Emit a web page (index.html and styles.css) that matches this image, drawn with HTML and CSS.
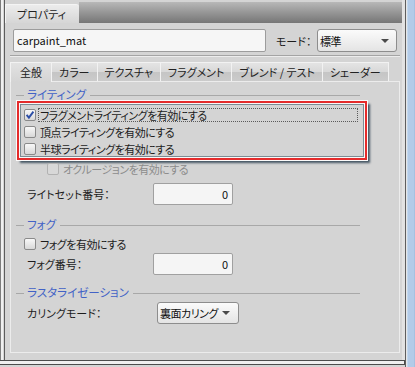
FILE: index.html
```html
<!DOCTYPE html>
<html lang="ja">
<head>
<meta charset="utf-8">
<title>プロパティ</title>
<link rel="stylesheet" href="styles.css">
</head>
<body>
<div class="app">
  <div class="col">
    <div class="upper">
      <div class="leftedge"></div>
      <div class="main">
        <div class="header">
          <div class="ptab">プロパティ</div>
          <div class="pbar"></div>
        </div>
        <div class="content">
          <div class="namerow">
            <div class="namefield">carpaint_mat</div>
            <span class="modelabel">モード：</span>
            <div class="select modesel"><span>標準</span><i class="arrow"></i></div>
          </div>
          <div class="sep"></div>
          <div class="tabs">
            <div class="tab active">全般</div>
            <div class="tab">カラー</div>
            <div class="tab">テクスチャ</div>
            <div class="tab">フラグメント</div>
            <div class="tab">ブレンド / テスト</div>
            <div class="tab">シェーダー</div>
          </div>
          <div class="panel">
            <div class="group">
              <div class="legend"><span class="dash"></span><span class="ltext">ライティング</span><span class="line"></span></div>
              <div class="highlight">
                <div class="check">
                  <span class="box"><svg width="10" height="10" viewBox="0 0 10 10"><path d="M1.6 4.8 L3.9 7.6 L8.4 1.6" fill="none" stroke="#2c4ea6" stroke-width="1.9"/></svg></span>
                  <span class="clabel focus">フラグメントライティングを有効にする</span>
                </div>
                <div class="check"><span class="box"></span><span class="clabel">頂点ライティングを有効にする</span></div>
                <div class="check"><span class="box"></span><span class="clabel">半球ライティングを有効にする</span></div>
              </div>
              <div class="check disabled sub"><span class="box"></span><span class="clabel">オクルージョンを有効にする</span></div>
              <div class="field first"><span class="flabel">ライトセット番号：</span><div class="num">0</div></div>
            </div>
            <div class="group fog">
              <div class="legend"><span class="dash"></span><span class="ltext">フォグ</span><span class="line"></span></div>
              <div class="check plain"><span class="box"></span><span class="clabel">フォグを有効にする</span></div>
              <div class="field"><span class="flabel">フォグ番号：</span><div class="num">0</div></div>
            </div>
            <div class="group raster">
              <div class="legend"><span class="dash"></span><span class="ltext">ラスタライゼーション</span><span class="line"></span></div>
              <div class="field cull"><span class="flabel">カリングモード：</span><div class="select cullsel"><span>裏面カリング</span><i class="arrow"></i></div></div>
            </div>
          </div>
        </div>
      </div>
      <div class="rlight"></div>
    </div>
    <div class="hscroll"></div>
  </div>
  <div class="rightedge"></div>
</div>
</body>
</html>
```

FILE: styles.css
```css
html, body {
  margin: 0;
  padding: 0;
}
body {
  width: 415px;
  height: 367px;
  overflow: hidden;
  background: #d4d4d4;
  font-family: "Noto Sans CJK JP", "Noto Sans", sans-serif;
  font-size: 11px;
  line-height: 14px;
  color: #1c1c1c;
  font-feature-settings: "palt";
}
.app {
  display: flex;
  height: 367px;
}
.col {
  width: 405px;
  display: flex;
  flex-direction: column;
}
.upper {
  height: 360px;
  display: flex;
}
.leftedge {
  width: 5px;
  background: linear-gradient(to right, #7c7c7c 0 1px, #f0f0f0 1px 3px, #d4d4d4 3px 4px, #5c5c5c 4px 5px);
}
.main {
  width: 397px;
  display: flex;
  flex-direction: column;
}
.rlight {
  width: 3px;
  background: #e2e2e2;
}
.rightedge {
  width: 10px;
  background: linear-gradient(to right, #5e5e5e 0 1px, #e6e6e6 1px 2px, #c4d9ef 2px 3px, #b3cbe8 3px 9px, #a6c1e0 9px 10px);
}
.hscroll {
  height: 5px;
  box-sizing: border-box;
  border: 1px solid #4c4c4c;
  border-left: none;
  background: #efefef;
  margin-bottom: 2px;
}

/* header */
.header {
  display: flex;
  align-items: flex-end;
  height: 23px;
}
.ptab {
  height: 19px;
  box-sizing: border-box;
  padding: 0 13px 0 11px;
  line-height: 18px;
  border-left: 1px solid #f4f4f4;
  border-top: 1px solid #f4f4f4;
  border-top-right-radius: 3px;
  background: linear-gradient(#ececec, #d6d6d6);
  color: #222;
}
.pbar {
  flex: 1;
  height: 21px;
  background: linear-gradient(#b8b8b8, #969696 50%, #767676);
}

.content {
  padding: 0 2px 0 5px;
}
.namerow {
  display: flex;
  align-items: center;
  margin-top: 6px;
  height: 23px;
  padding: 0 3px;
}
.namefield {
  width: 253px;
  height: 23px;
  box-sizing: border-box;
  border: 1px solid #9c9c9c;
  border-radius: 2px;
  background: #f6f6f6;
  padding-left: 3px;
  line-height: 21px;
  color: #111;
}
.modelabel {
  margin-left: 10px;
  width: 41px;
}
.select {
  display: flex;
  align-items: center;
  justify-content: space-between;
  box-sizing: border-box;
  height: 23px;
  border: 1px solid #8d8d8d;
  border-radius: 3px;
  background: linear-gradient(#fbfbfb, #e4e4e4);
  padding: 0 7px 0 2px;
  color: #111;
}
.select span {
  letter-spacing: -0.5px;
}
.modesel {
  width: 80px;
}
.arrow {
  width: 0;
  height: 0;
  border-left: 4px solid transparent;
  border-right: 4px solid transparent;
  border-top: 4px solid #4a4a4a;
}
.sep {
  margin-top: 3px;
  height: 0;
  border-top: 1px solid #a4a4a4;
  border-bottom: 1px solid #ececec;
}

/* tabs */
.tabs {
  display: flex;
  margin-top: 5px;
  height: 19px;
  position: relative;
  z-index: 1;
}
.tab {
  box-sizing: border-box;
  height: 19px;
  padding: 0 7px;
  line-height: 18px;
  border-top: 1px solid #f2f2f2;
  border-right: 1px solid #f2f2f2;
  background: linear-gradient(#e4e4e4, #d8d8d8 50%, #c5c5c5 50%, #cbcbcb);
  color: #222;
}
.tab.active {
  border-left: 1px solid #f2f2f2;
  height: 20px;
  background: linear-gradient(#e2e2e2, #d4d4d4);
  padding: 0 9px;
}

/* panel */
.panel {
  box-sizing: border-box;
  height: 272px;
  border: 1px solid #ececec;
  background: #d4d4d4;
  padding-top: 5px;
}
.group {
  margin: 0 39px 0 5px;
}
.legend {
  display: flex;
  align-items: center;
  height: 14px;
}
.dash {
  width: 8px;
  height: 1px;
  background: #a8a8a8;
  margin-top: 2px;
}
.line {
  flex: 1;
  height: 1px;
  background: #a8a8a8;
  margin-top: 2px;
}
.ltext {
  color: #4262c6;
  margin: 0 4px 0 3px;
  font-size: 11.5px;
}
.highlight {
  margin: 0 -7px 0 1px;
  border: 2px solid #e42b2b;
  padding: 3px 5px 1px 5px;
  box-shadow: 0 0 0 1px #fbfbfb, 3px 3px 2px 0 rgba(45, 65, 80, 0.85), inset 0 0 0 1px #f8f8f8, inset 0 0 0 2px #7c8c94;
}
.check {
  display: flex;
  align-items: center;
  height: 17px;
}
.box {
  width: 12px;
  height: 12px;
  box-sizing: border-box;
  border: 1px solid #8a8a8a;
  border-radius: 2px;
  background: linear-gradient(#f8f8f8, #d8d8d8);
  margin-right: 2px;
  display: flex;
  align-items: center;
  justify-content: center;
}
.clabel {
  border: 1px dotted transparent;
  padding: 0 1px;
  line-height: 12px;
  letter-spacing: -0.5px;
}
.clabel.focus {
  flex: 1;
  border-color: #5a5a5a;
  margin-right: 2px;
}
.check.sub {
  padding-left: 31px;
}
.check.plain {
  padding-left: 8px;
  margin-top: 4px;
}
.disabled {
  color: #8c8c8c;
}
.disabled .box {
  border-color: #b2b2b2;
  background: #d8d8d8;
}
.field {
  display: flex;
  align-items: center;
  padding-left: 11px;
  margin-top: 1px;
}
.field.first {
  margin-top: 6px;
}
.flabel {
  width: 126px;
}
.num {
  width: 80px;
  height: 22px;
  box-sizing: border-box;
  border: 1px solid #a0a0a0;
  border-radius: 2px;
  background: #f5f5f5;
  text-align: right;
  padding-right: 4px;
  line-height: 20px;
  color: #111;
}
.fog {
  margin-top: 12px;
}
.raster {
  margin-top: 10px;
}
.field.cull {
  margin-top: 3px;
}
.cullsel {
  width: 82px;
  height: 22px;
  margin-left: 4px;
  padding-right: 8px;
}
```
